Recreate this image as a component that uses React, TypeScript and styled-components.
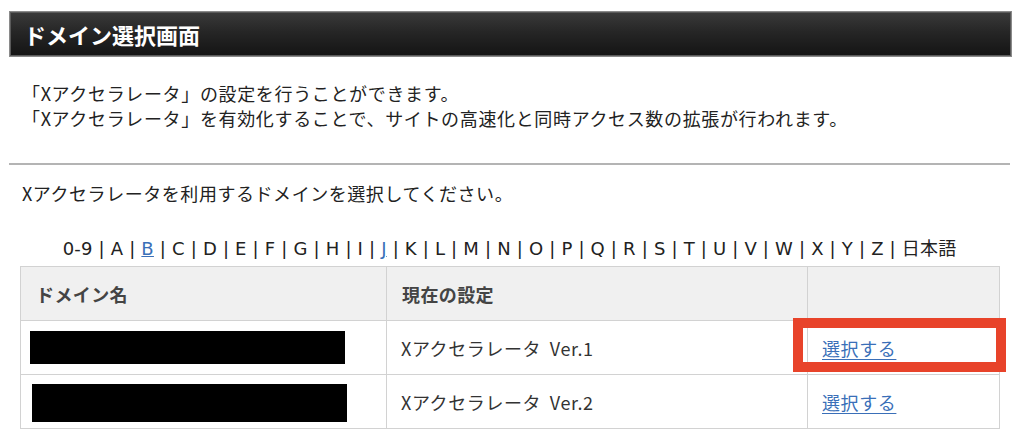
import React from "react";
import styled, { createGlobalStyle } from "styled-components";

const GlobalStyle = createGlobalStyle`
  html, body { margin: 0; padding: 0; background: #ffffff; }
  body {
    font-family: "DejaVu Sans", "Noto Sans CJK JP", sans-serif;
    color: #222;
  }
`;

const Page = styled.div`
  width: 1024px;
  height: 447px;
  overflow: hidden;
  background: #fff;
  display: flex;
  flex-direction: column;
`;

const TitleBar = styled.div`
  margin: 11px 12px 0 9px;
  height: 46px;
  box-sizing: border-box;
  border: 1px solid #8a8a8a;
  box-shadow: inset 0 0 0 1px #5a5a5a;
  background: linear-gradient(to bottom, #3a3a3a 0%, #262626 45%, #141414 100%);
  display: flex;
  align-items: center;
  padding-left: 14px;
`;

const Title = styled.h1`
  margin: 0;
  font-family: "Noto Sans CJK JP", sans-serif;
  font-size: 22px;
  line-height: 26px;
  font-weight: 700;
  color: #ffffff;
`;

const Intro = styled.div`
  margin: 24px 0 0 22px;
  font-family: "Noto Sans CJK JP", sans-serif;
  font-size: 18px;
  letter-spacing: 0.65px;
  line-height: 25px;
  color: #222;
`;

const Rule = styled.hr`
  margin: 32px 14px 0 9px;
  border: 0;
  border-top: 2px solid #b4b4b4;
  height: 0;
`;

const Lead = styled.p`
  margin: 16px 0 0 22px;
  font-family: "Noto Sans CJK JP", sans-serif;
  font-size: 18px;
  letter-spacing: 0.55px;
  line-height: 25px;
  color: #222;
`;

const Nav = styled.div`
  margin: 30px 0 0 20px;
  width: 979px;
  text-align: center;
  font-family: "DejaVu Sans", "Noto Sans CJK JP", sans-serif;
  font-size: 18px;
  letter-spacing: 0.2px;
  line-height: 25px;
  color: #222;
  white-space: nowrap;
`;

const NavLink = styled.a`
  color: #3a6fb8;
  text-decoration: underline;
`;

const Table = styled.table`
  margin: 5px 0 0 20px;
  width: 979px;
  border-collapse: collapse;
  table-layout: fixed;
  font-family: "Noto Sans CJK JP", sans-serif;
  font-size: 18px;
  letter-spacing: 0.6px;
`;

const Th = styled.th`
  height: 54px;
  box-sizing: border-box;
  background: #f0f0f0;
  border: 1px solid #d2d2d2;
  text-align: left;
  padding: 0 14px 0 15px;
  font-weight: 700;
  color: #444;
  letter-spacing: 0.4px;
`;

const Td = styled.td<{ $pad?: number }>`
  position: relative;
  height: 54px;
  box-sizing: border-box;
  border: 1px solid #d2d2d2;
  padding: 0 ${(p) => p.$pad ?? 14}px;
  color: #333;
  vertical-align: middle;
`;

const Setting = styled.span`
  word-spacing: 4px;
`;

const Redacted = styled.div<{ $w: number; $h: number; $dy: number }>`
  width: ${(p) => p.$w}px;
  height: ${(p) => p.$h}px;
  background: #000;
  margin-top: ${(p) => p.$dy}px;
`;

const SelectLink = styled.a`
  color: #3a6fb8;
  text-decoration: underline;
  text-underline-offset: 3px;
`;

const Highlight = styled.div`
  position: absolute;
  left: -15px;
  right: -7px;
  top: -3px;
  bottom: 2px;
  border: 10px solid #e8432a;
  pointer-events: none;
`;

const letters = ["0-9", "A", "B", "C", "D", "E", "F", "G", "H", "I", "J", "K", "L", "M", "N", "O", "P", "Q", "R", "S", "T", "U", "V", "W", "X", "Y", "Z", "日本語"];
const linked = new Set(["B", "J"]);

const rows = [
  { w: 315, h: 33, pad: 9, dy: 0, setting: "Xアクセラレータ Ver.1", highlight: true },
  { w: 315, h: 38, pad: 11, dy: 2, setting: "Xアクセラレータ Ver.2", highlight: false },
];

export default function App() {
  return (
    <Page>
      <GlobalStyle />
      <TitleBar>
        <Title>ドメイン選択画面</Title>
      </TitleBar>
      <Intro>
        「Xアクセラレータ」の設定を行うことができます。
        <br />
        「Xアクセラレータ」を有効化することで、サイトの高速化と同時アクセス数の拡張が行われます。
      </Intro>
      <Rule />
      <Lead>Xアクセラレータを利用するドメインを選択してください。</Lead>
      <Nav>
        {letters.map((l, i) => (
          <React.Fragment key={l}>
            {i > 0 && " | "}
            {linked.has(l) ? <NavLink href="#">{l}</NavLink> : l}
          </React.Fragment>
        ))}
      </Nav>
      <Table>
        <colgroup>
          <col style={{ width: 366 }} />
          <col style={{ width: 421 }} />
          <col style={{ width: 192 }} />
        </colgroup>
        <thead>
          <tr>
            <Th>ドメイン名</Th>
            <Th>現在の設定</Th>
            <Th></Th>
          </tr>
        </thead>
        <tbody>
          {rows.map((r, i) => (
            <tr key={i}>
              <Td $pad={r.pad}>
                <Redacted $w={r.w} $h={r.h} $dy={r.dy} />
              </Td>
              <Td>
                <Setting>{r.setting}</Setting>
              </Td>
              <Td>
                <SelectLink href="#">選択する</SelectLink>
                {r.highlight && <Highlight />}
              </Td>
            </tr>
          ))}
        </tbody>
      </Table>
    </Page>
  );
}
